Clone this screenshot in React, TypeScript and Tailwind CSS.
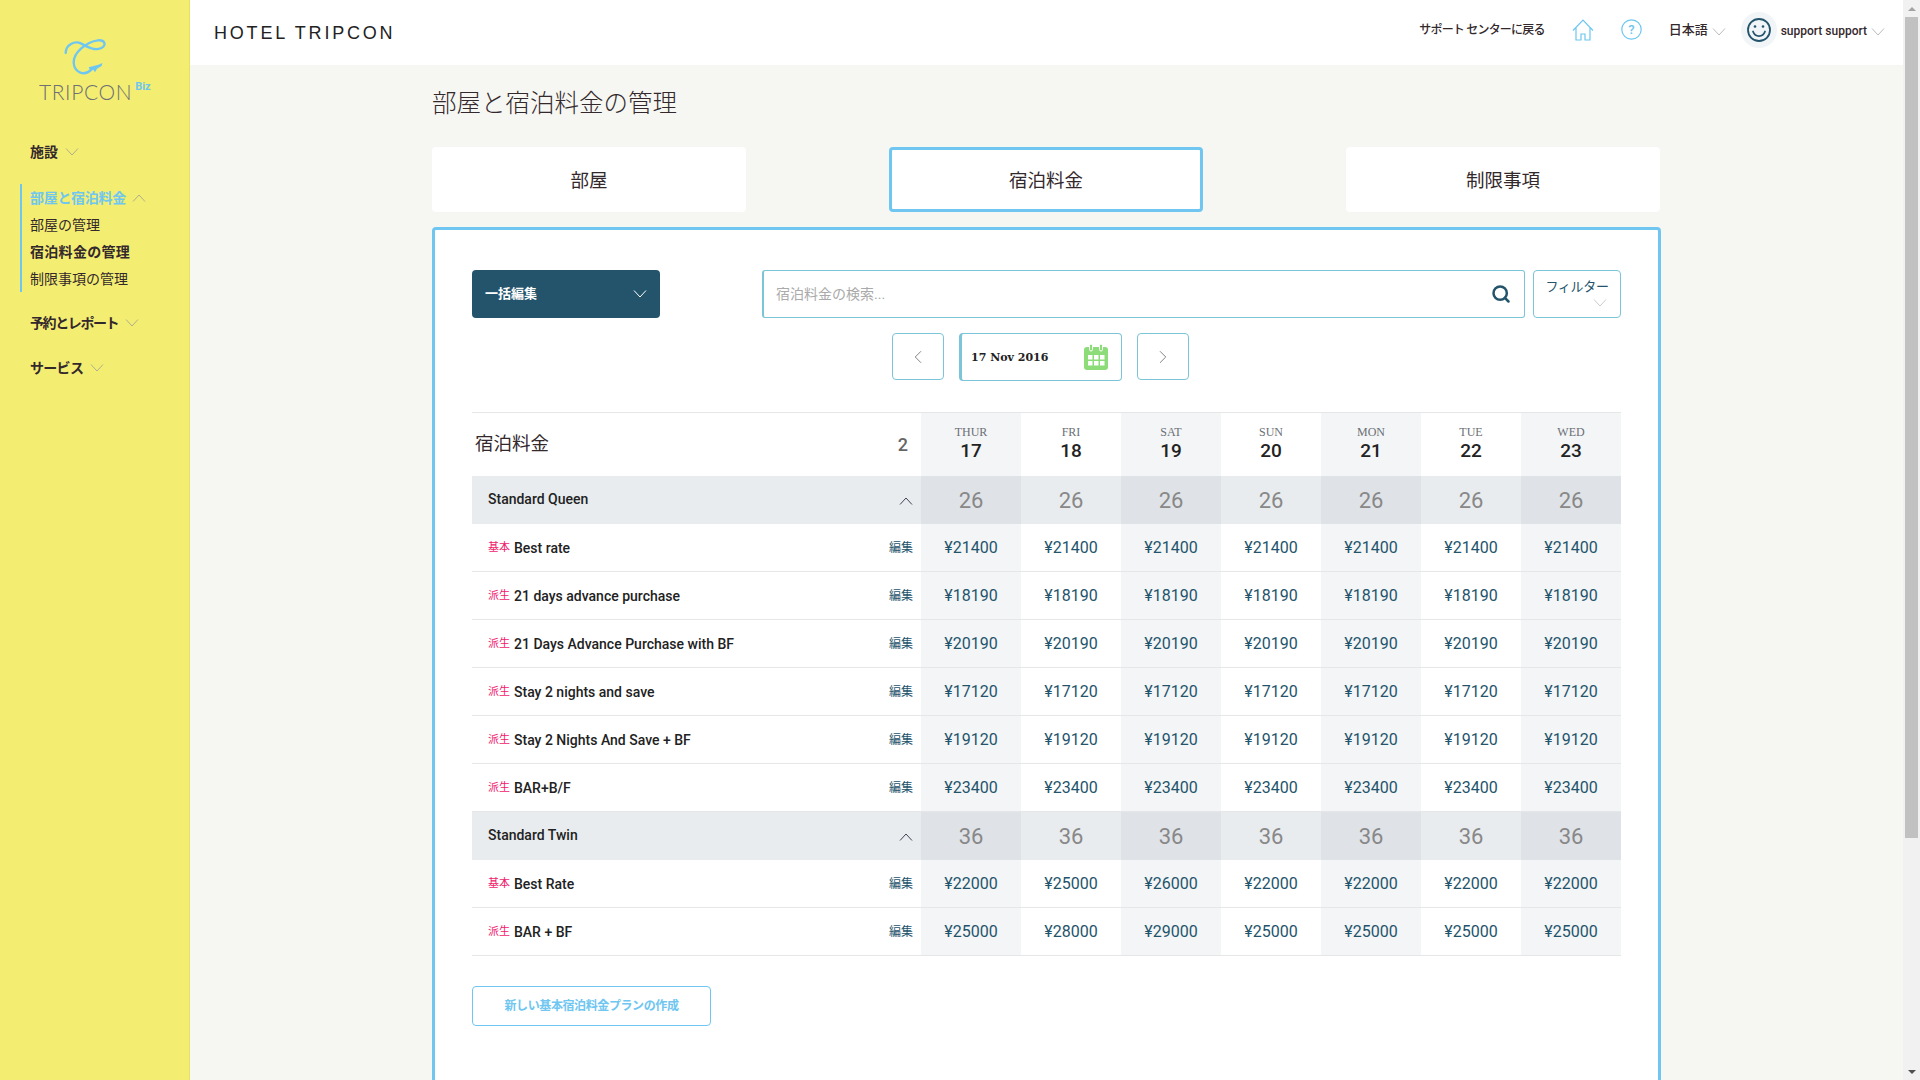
import { ChevronLeft, ChevronRight, Search } from 'lucide-react';

const DAYS = [
  { name: 'THUR', date: 17 },
  { name: 'FRI', date: 18 },
  { name: 'SAT', date: 19 },
  { name: 'SUN', date: 20 },
  { name: 'MON', date: 21 },
  { name: 'TUE', date: 22 },
  { name: 'WED', date: 23 },
];

const flat = (price: number) => Array(7).fill(price) as number[];

const ROOMS = [
  {
    name: 'Standard Queen',
    count: 26,
    plans: [
      { kind: '基本', name: 'Best rate', prices: flat(21400) },
      { kind: '派生', name: '21 days advance purchase', prices: flat(18190) },
      { kind: '派生', name: '21 Days Advance Purchase with BF', prices: flat(20190) },
      { kind: '派生', name: 'Stay 2 nights and save', prices: flat(17120) },
      { kind: '派生', name: 'Stay 2 Nights And Save + BF', prices: flat(19120) },
      { kind: '派生', name: 'BAR+B/F', prices: flat(23400) },
    ],
  },
  {
    name: 'Standard Twin',
    count: 36,
    plans: [
      { kind: '基本', name: 'Best Rate', prices: [22000, 25000, 26000, 22000, 22000, 22000, 22000] },
      { kind: '派生', name: 'BAR + BF', prices: [25000, 28000, 29000, 25000, 25000, 25000, 25000] },
    ],
  },
];

function Chevron({ up, className = 'text-[#b0ae8c]' }: { up?: boolean; className?: string }) {
  return (
    <svg width="14" height="8" viewBox="0 0 14 8" fill="none" className={`shrink-0 ${className}`}>
      <path d={up ? 'M1 7.5 7 1l6 6.5' : 'M1 .5 7 7l6-6.5'} stroke="currentColor" strokeWidth="1" />
    </svg>
  );
}

function Logo() {
  return (
    <svg width="45" height="40" viewBox="130 55 135 120" fill="none" className="ml-[63px]">
      <path
        d="M138 100C138 75 165 62 185 72C205 82 225 95 245 85C262 75 255 60 235 62C200 66 160 100 162 130C165 160 195 170 215 150"
        stroke="#6ec6f1"
        strokeWidth="7"
        strokeLinecap="round"
      />
      <path d="M207 143 236 135 248 130 246 139 232 147 226 158 221 150 212 154Z" fill="#6ec6f1" />
    </svg>
  );
}

function Sidebar() {
  return (
    <aside className="w-[190px] shrink-0 bg-[#f3ee72] border-r border-[#e6e164] pt-[38px] text-sm text-[#33282c]">
      <Logo />
      <div className="flex items-start ml-[39px] mt-[2px]">
        <span className="font-[Lato,sans-serif] font-light text-[21px] leading-[24px] tracking-[0.6px] text-[#6f6f74]">
          TRIPCON
        </span>
        <span className="ml-[3px] text-[11px] leading-[14px] font-bold text-[#6ec6f1]">Biz</span>
      </div>
      <nav className="mt-[36px]">
        <div className="flex items-center gap-[7px] h-[24px] pl-[30px] font-bold">
          施設 <Chevron />
        </div>
        <div className="mt-[20px] ml-[20px] pl-[8px] border-l-2 border-[#6ec6f1]">
          <div className="flex items-center gap-[6px] h-[27px] font-bold tracking-[-0.3px] text-[#6ec6f1]">
            部屋と宿泊料金 <Chevron up />
          </div>
          <div className="flex items-center h-[27px]">部屋の管理</div>
          <div className="flex items-center h-[27px] font-bold tracking-[0.3px]">宿泊料金の管理</div>
          <div className="flex items-center h-[27px]">制限事項の管理</div>
        </div>
        <div className="mt-[19px] flex items-center gap-[7px] h-[24px] pl-[30px] font-bold tracking-[-1.4px]">
          予約とレポート <Chevron />
        </div>
        <div className="mt-[21px] flex items-center gap-[7px] h-[24px] pl-[30px] font-bold tracking-[-0.7px]">
          サービス <Chevron />
        </div>
      </nav>
    </aside>
  );
}

function Header() {
  return (
    <header className="h-[65px] shrink-0 bg-white flex items-center pl-[24px] pr-[18px]">
      <span className="font-[Liberation_Sans,sans-serif] text-lg tracking-[2.8px] text-[#222]">
        HOTEL TRIPCON
      </span>
      <div className="ml-auto flex items-center text-[13px] font-medium text-[#33282c]">
        <span className="-mt-[5px] text-xs tracking-[-0.8px]">サポート センターに戻る</span>
        <svg width="22" height="22" viewBox="0 0 22 22" fill="none" stroke="#6ec6f1" strokeWidth="1.2" className="ml-[27px] -mt-[6px]">
          <path d="M1 11.5 11 1l10 10.5M4 9v12h5v-6h4v6h5V9" />
        </svg>
        <svg width="21" height="21" viewBox="0 0 21 21" fill="none" className="ml-[27px] -mt-[6px]">
          <circle cx="10.5" cy="10.5" r="9.7" stroke="#6ec6f1" strokeWidth="1.2" />
          <text x="10.5" y="15" textAnchor="middle" fontSize="13" fill="#6ec6f1">?</text>
        </svg>
        <span className="ml-[27px] -mt-[5px]">日本語</span>
        <Chevron className="ml-[4px] -mt-[2px] text-[#bbb]" />
        <div className="ml-[15px] -mt-[5px] w-[36px] h-[36px] rounded-full bg-[#f1f5f7] flex items-center justify-center">
          <svg width="24" height="24" viewBox="0 0 24 24" fill="none" stroke="#24546b" strokeWidth="1.8">
            <circle cx="12" cy="12" r="11" />
            <path d="M6 13.5c1.2 3.2 3.400 4.600 6 4.600s4.800-1.400 6-4.600" strokeLinecap="round" />
            <circle cx="8" cy="8.500" r="1.300" fill="#24546b" stroke="none" />
            <circle cx="16" cy="8.500" r="1.300" fill="#24546b" stroke="none" />
          </svg>
        </div>
        <span className="ml-[4px] -mt-[4px] text-xs">support support</span>
        <Chevron className="ml-[4px] -mt-[2px] text-[#bbb]" />
      </div>
    </header>
  );
}

function CalendarIcon() {
  return (
    <svg width="24" height="26" viewBox="0 0 24 26" className="shrink-0">
      <rect x="0" y="3" width="24" height="23" rx="3" fill="#8ddc7a" />
      <rect x="5.500" y="0" width="3" height="7" rx="1.500" fill="#8ddc7a" stroke="#fff" strokeWidth="1" />
      <rect x="15.500" y="0" width="3" height="7" rx="1.500" fill="#8ddc7a" stroke="#fff" strokeWidth="1" />
      {[4, 10, 16].map(x =>
        [11, 17].map(y => <rect key={`${x}-${y}`} x={x} y={y} width="4.500" height="4.500" fill="#fff" />),
      )}
    </svg>
  );
}

function Toolbar() {
  return (
    <>
      <div className="flex">
        <div className="w-[188px] h-[48px] rounded-[4px] bg-[#24546b] flex items-center justify-between pl-[13px] pr-[13px] text-white text-[13px] font-bold">
          一括編集
          <Chevron className="text-white" />
        </div>
        <div className="ml-[102px] w-[763px] h-[48px] rounded-[3px] border border-l-2 border-[#7cc4d8] flex items-center justify-between pl-[12px] pr-[13px]">
          <span className="text-sm text-[#aaa]">宿泊料金の検索...</span>
          <Search size={20} strokeWidth={3} className="text-[#24546b]" />
        </div>
        <div className="ml-[8px] w-[88px] h-[48px] rounded-[4px] border border-[#7cc4d8] flex flex-col items-center pt-[6px] text-[13px] tracking-[-0.3px] text-[#24546b]">
          フィルター
          <Chevron className="self-end mt-[2px] mr-[13px] text-[#ccc]" />
        </div>
      </div>
      <div className="flex gap-[15px] mt-[15px] pl-[420px]">
        <div className="w-[52px] h-[47px] rounded-[4px] border border-[#7cc4d8] flex items-center justify-center">
          <ChevronLeft size={22} strokeWidth={1} className="text-[#777]" />
        </div>
        <div className="w-[163px] h-[48px] rounded-[4px] border border-l-[3px] border-[#7cc4d8] flex items-center justify-between pl-[9px] pr-[13px]">
          <span className="pt-[2px] font-[DejaVu_Serif,serif] text-[11px] font-bold text-[#222]">17 Nov 2016</span>
          <CalendarIcon />
        </div>
        <div className="w-[52px] h-[47px] rounded-[4px] border border-[#7cc4d8] flex items-center justify-center">
          <ChevronRight size={22} strokeWidth={1} className="text-[#777]" />
        </div>
      </div>
    </>
  );
}

function RateTable() {
  return (
    <div className="mt-[31px] w-[1149px] border-t border-[#e4e6e8]">
      <div className="flex h-[63px]">
        <div className="flex-1 flex items-center justify-between pl-[3px] pr-[13px]">
          <span className="text-[18.5px]">宿泊料金</span>
          <span className="text-[18px] font-medium text-[#666]">2</span>
        </div>
        {DAYS.map((d, i) => (
          <div
            key={d.name}
            className={`w-[100px] flex flex-col items-center pt-[12px] ${i % 2 === 0 ? 'bg-[#f3f5f7]' : 'bg-white'}`}
          >
            <span className="font-[Liberation_Serif,serif] text-xs leading-[14px] text-[#6b6f75]">{d.name}</span>
            <span className="text-[19px] leading-[24px] font-medium text-[#222]">{d.date}</span>
          </div>
        ))}
      </div>
      {ROOMS.map(room => (
        <div key={room.name}>
          <div className="flex h-[48px] bg-[#e8ecef]">
            <div className="flex-1 flex items-center justify-between pl-[16px] pr-[8px]">
              <span className="text-sm font-medium text-[#222] -mt-[2px]">{room.name}</span>
              <Chevron up className="text-[#445] mt-[2px]" />
            </div>
            {DAYS.map((d, i) => (
              <div
                key={d.name}
                className={`w-[100px] flex items-center justify-center text-[22px] text-[#888] ${i % 2 === 0 ? 'bg-[#dfe3e7]' : ''}`}
              >
                {room.count}
              </div>
            ))}
          </div>
          {room.plans.map(plan => (
            <div key={plan.name} className="flex h-[48px] border-b border-[#e4e6e8]">
              <div className="flex-1 flex items-center pt-[1px] pl-[16px] pr-[8px] text-sm font-medium text-[#222]">
                <span className="w-[26px] text-[11px] font-normal text-[#f0196e]">{plan.kind}</span>
                <span>{plan.name}</span>
                <span className="ml-auto text-xs font-normal text-[#24546b]">編集</span>
              </div>
              {plan.prices.map((price, i) => (
                <div
                  key={i}
                  className={`w-[100px] flex items-center justify-center pt-[1px] text-base text-[#24546b] ${i % 2 === 0 ? 'bg-[#f3f5f7]' : ''}`}
                >
                  ¥{price}
                </div>
              ))}
            </div>
          ))}
        </div>
      ))}
    </div>
  );
}

function Scrollbar() {
  return (
    <div className="w-[17px] shrink-0 bg-[#f1f1f1] flex flex-col items-center">
      <div className="h-[17px] shrink-0 flex items-center justify-center">
        <div className="w-0 h-0 border-x-[4px] border-x-transparent border-b-[4px] border-b-[#a3a3a3]" />
      </div>
      <div className="w-[13px] h-[821px] shrink-0 bg-[#c1c1c1]" />
      <div className="mt-auto h-[17px] shrink-0 flex items-center justify-center">
        <div className="w-0 h-0 border-x-[4px] border-x-transparent border-t-[4px] border-t-[#505050]" />
      </div>
    </div>
  );
}

export default function App() {
  return (
    <div className="h-screen overflow-hidden flex bg-[#f6f7f3] text-[#33282c] font-[Roboto,Noto_Sans_CJK_JP,sans-serif]">
      <Sidebar />
      <div className="flex-1 min-w-0 flex flex-col">
        <Header />
        <main className="flex-1 overflow-hidden">
          <div className="w-[1229px] mx-auto">
            <h1 className="h-[82px] pt-[21px] text-[24.5px] leading-[36px] font-light">部屋と宿泊料金の管理</h1>
            <div className="flex justify-between w-[1228px]">
              <button className="w-[314px] h-[65px] pt-[5px] rounded-[4px] bg-white text-[18.5px]">部屋</button>
              <button className="w-[314px] h-[65px] pt-[5px] rounded-[4px] bg-white border-[3px] border-[#6ec6f1] text-[18.5px]">宿泊料金</button>
              <button className="w-[314px] h-[65px] pt-[5px] rounded-[4px] bg-white text-[18.5px]">制限事項</button>
            </div>
            <section className="mt-[15px] h-[900px] rounded-t-[4px] bg-white border-[3px] border-[#6ec6f1] pt-[40px] pl-[37px]">
              <Toolbar />
              <RateTable />
              <button className="mt-[30px] w-[239px] h-[40px] rounded-[4px] border border-[#6ec6f1] text-xs font-bold tracking-[-0.4px] text-[#6ec6f1]">
                新しい基本宿泊料金プランの作成
              </button>
            </section>
          </div>
        </main>
      </div>
      <Scrollbar />
    </div>
  );
}
